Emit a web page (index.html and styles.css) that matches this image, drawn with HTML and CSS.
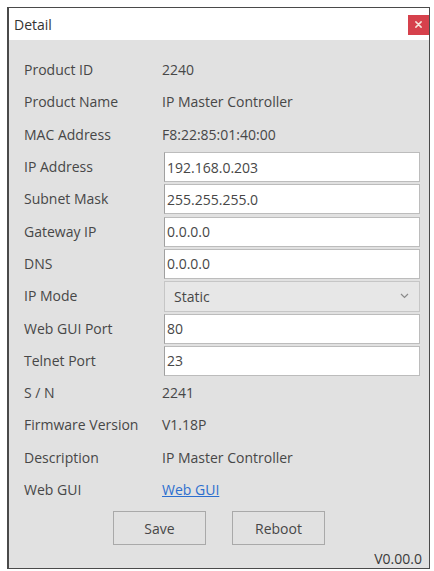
FILE: index.html
```html
<!DOCTYPE html>
<html lang="en">
<head>
<meta charset="utf-8">
<title>Detail</title>
<link rel="stylesheet" href="styles.css">
</head>
<body>
<div class="window">
  <div class="titlebar">
    <span class="title">Detail</span>
    <button class="close" aria-label="Close">
      <svg width="7" height="7" viewBox="0 0 8 8"><path d="M1 1 L7 7 M7 1 L1 7" stroke="#f6e6dc" stroke-width="1.7" stroke-linecap="round"/></svg>
    </button>
  </div>
  <div class="fields">
    <div class="label">Product ID</div><div class="value">2240</div>
    <div class="label">Product Name</div><div class="value">IP Master Controller</div>
    <div class="label">MAC Address</div><div class="value">F8:22:85:01:40:00</div>
    <div class="label">IP Address</div><input class="input" type="text" value="192.168.0.203">
    <div class="label">Subnet Mask</div><input class="input" type="text" value="255.255.255.0">
    <div class="label">Gateway IP</div><input class="input" type="text" value="0.0.0.0">
    <div class="label">DNS</div><input class="input" type="text" value="0.0.0.0">
    <div class="label">IP Mode</div>
    <div class="select"><span>Static</span>
      <svg width="9" height="6" viewBox="0 0 9 6"><path d="M1 1 L4.5 4.5 L8 1" fill="none" stroke="#8a8a8a" stroke-width="1.2"/></svg>
    </div>
    <div class="label">Web GUI Port</div><input class="input" type="text" value="80">
    <div class="label">Telnet Port</div><input class="input" type="text" value="23">
    <div class="label">S / N</div><div class="value">2241</div>
    <div class="label">Firmware Version</div><div class="value">V1.18P</div>
    <div class="label">Description</div><div class="value">IP Master Controller</div>
    <div class="label">Web GUI</div><div class="value"><a class="link" href="#">Web GUI</a></div>
  </div>
  <div class="actions">
    <button class="btn">Save</button>
    <button class="btn">Reboot</button>
  </div>
  <div class="version">V0.00.0</div>
</div>
</body>
</html>
```
FILE: styles.css
```css
html, body {
  margin: 0;
  padding: 0;
  background: #ffffff;
}
body {
  font-family: "Open Sans", "Noto Sans", sans-serif;
  font-size: 14px;
  color: #474747;
}
.window {
  margin: 7px 0 0 7px;
  width: 423px;
  height: 562px;
  box-sizing: border-box;
  border: 1px solid #4a4a4a;
  border-left-width: 2px;
  background: #e1e1e1;
  display: flex;
  flex-direction: column;
}
.titlebar {
  height: 32px;
  background: #ffffff;
  display: flex;
  align-items: center;
  justify-content: space-between;
  padding-left: 5px;
  flex: none;
}
.title {
  color: #333333;
  font-size: 14px;
}
.close {
  width: 21px;
  height: 20px;
  margin-right: 0;
  margin-top: 1px;
  border: none;
  padding: 0;
  background: #d6414c;
  display: flex;
  align-items: center;
  justify-content: center;
}
.fields {
  display: grid;
  grid-template-columns: 138px 1fr;
  grid-auto-rows: 32.3px;
  padding: 14px 10px 0 15px;
  align-items: center;
}
.label {
  line-height: 20px;
  white-space: nowrap;
}
.value {
  line-height: 20px;
  white-space: nowrap;
}
.input {
  font: inherit;
  color: #474747;
  height: 30px;
  box-sizing: border-box;
  margin: 0 0 0 2px;
  padding: 0 0 0 2px;
  border: 1px solid #bcbcbc;
  border-left-color: #a0a0a0;
  background: #ffffff;
  outline: none;
  width: calc(100% - 1px);
}
.select {
  height: 31px;
  box-sizing: border-box;
  margin-left: 2px;
  margin-right: -1px;
  padding: 0 10px 0 9px;
  border: 1px solid #c6c6c6;
  background: #e7e7e7;
  display: flex;
  align-items: center;
  justify-content: space-between;
}
.link {
  color: #2d6fcf;
  text-decoration: underline;
}
.actions {
  display: flex;
  justify-content: center;
  gap: 26px;
  margin-top: 5px;
}
.btn {
  font: inherit;
  color: #474747;
  width: 93px;
  height: 34px;
  border: 1px solid #a9a9a9;
  background: #e1e1e1;
  padding: 0;
}
.version {
  margin-top: auto;
  align-self: flex-end;
  padding: 0 7px 1px 0;
  line-height: 16px;
  color: #3a3a3a;
}
```
